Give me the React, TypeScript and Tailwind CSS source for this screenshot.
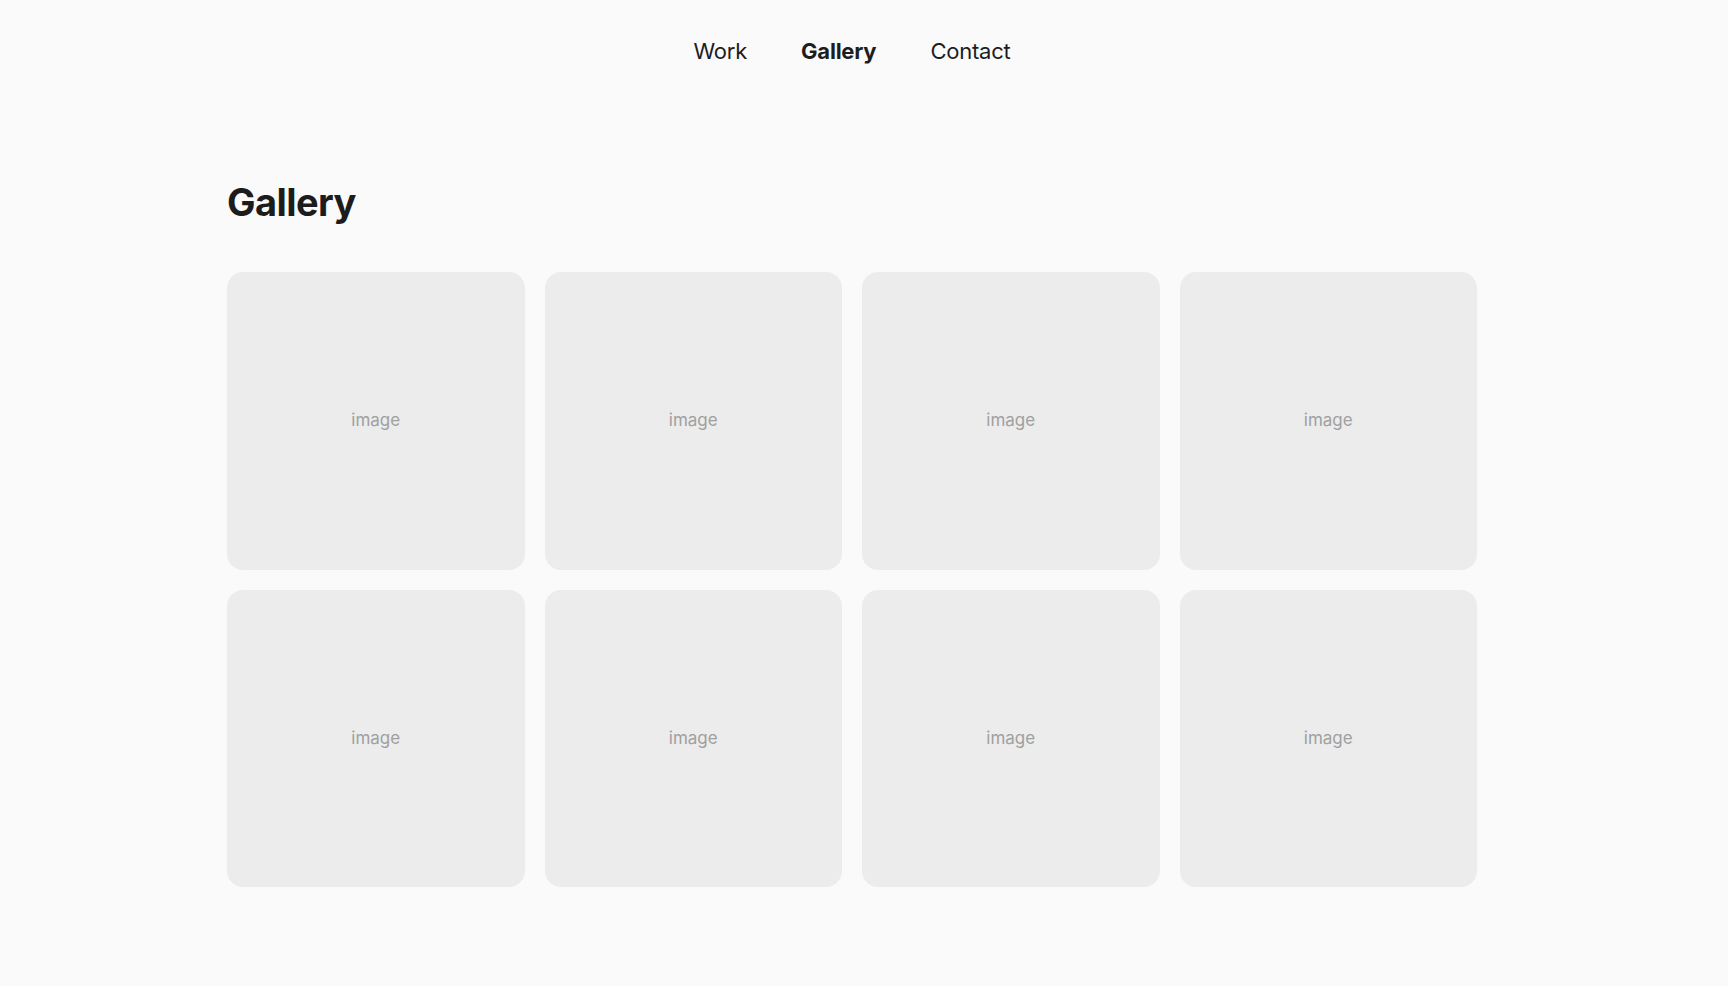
const items = Array.from({ length: 8 }, (_, i) => i);

function Nav() {
  return (
    <nav className="flex justify-center gap-[54px] pt-10 text-[22px] leading-none text-[#1d1d1f]">
      <a href="#" className="tracking-[-0.01em]">Work</a>
      <a href="#" className="font-bold tracking-[-0.01em]">Gallery</a>
      <a href="#" className="tracking-[-0.01em]">Contact</a>
    </nav>
  );
}

function Tile() {
  return (
    <div className="aspect-square rounded-2xl bg-[#ececec] flex items-center justify-center">
      <span className="text-[17px] text-[#a0a0a0]">image</span>
    </div>
  );
}

export default function App() {
  return (
    <div
      className="min-h-screen bg-[#fafafa] pr-6"
      style={{ fontFamily: 'Inter, "Noto Sans", sans-serif' }}
    >
      <Nav />
      <main className="mx-auto max-w-[1250px] pt-[121px] pb-24">
        <h1 className="text-[38px] font-bold leading-none tracking-[-0.015em] text-[#1c1c1c]">
          Gallery
        </h1>
        <div className="mt-[51px] grid grid-cols-4 gap-5">
          {items.map((i) => (
            <Tile key={i} />
          ))}
        </div>
      </main>
    </div>
  );
}
